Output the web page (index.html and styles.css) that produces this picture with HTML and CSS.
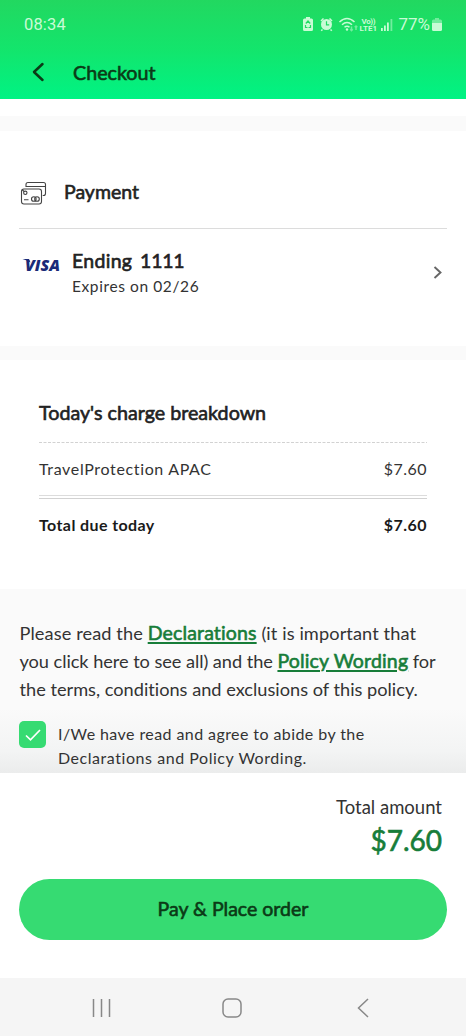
FILE: index.html
```html
<!DOCTYPE html>
<html lang="en">
<head>
<meta charset="utf-8">
<title>Checkout</title>
<link rel="stylesheet" href="styles.css">
</head>
<body>
<div class="screen">
  <header class="header">
    <div class="status">
      <span class="clock">08:34</span>
      <div class="status-icons">
        <svg class="status-glyphs" width="94" height="20" viewBox="0 0 94 20">
          <path fill="currentColor" d="M6 3h4v1.500h1.500q1.500 0 1.500 1.500v9.500q0 1.500-1.500 1.500h-7q-1.500 0-1.500-1.500v-9.500q0-1.500 1.500-1.500h1.500z"/>
          <path class="cutout" d="M5.800 9.500l2.200-2.500 2.200 2.500M5.500 11v2.500h2M10.500 11v2.500h-2"/>
          <circle cx="26.500" cy="10.500" r="5.500" fill="currentColor"/>
          <path class="line" d="M21 7l2.500-2.500M32 7l-2.500-2.500M22.500 15.500l-1.300 1.300M30.500 15.500l1.300 1.300"/>
          <path class="cutout" d="M26.500 7.200v3.600h2.700"/>
          <path class="line" d="M39.500 8q7.500-7 15 0M42 10.700q5-4.500 10 0M44.500 13.300q2.500-2.200 5 0"/>
          <circle cx="47" cy="15.500" r="1.200" fill="currentColor"/>
          <path class="line faint" d="M51.500 12.500v4M50.200 15.300l1.300 1.300 1.300-1.300M56 16v-4M54.700 13.300l1.300-1.300 1.300 1.300"/>
          <text class="volte" x="61.500" y="9.800" textLength="14">Vo))</text>
          <text class="volte" x="59.500" y="17.300" textLength="17.500">LTE1</text>
          <path fill="currentColor" d="M81 14h1.800v3h-1.800zM84 11.500h1.800v5.500h-1.800zM87 8.500h1.800v8.500h-1.800z"/>
          <path class="faint" fill="currentColor" d="M90.500 5h1.800v12h-1.800z"/>
        </svg>
        <span class="percent">77%</span>
        <svg width="10" height="14" viewBox="0 0 10 14"><path class="faint" fill="currentColor" d="M3 0h4v1.500h1.500q1.500 0 1.500 1.500v2H0V3q0-1.500 1.500-1.500H3z"/><path fill="currentColor" d="M0 5h10v6.500q0 1.500-1.500 1.500h-7Q0 13 0 11.500z"/></svg>
      </div>
    </div>
    <div class="titlebar">
      <svg width="12" height="20" viewBox="0 0 12 20"><path d="M10.500 2L2 10l8.500 8" fill="none" stroke="currentColor" stroke-width="2.500" stroke-linecap="round" stroke-linejoin="round"/></svg>
      <h1 class="title semibold">Checkout</h1>
    </div>
  </header>

  <main class="content">
    <section class="payment">
      <div class="payment-head">
        <svg class="cards" width="27" height="25" viewBox="0 0 27 25">
          <path d="M6 6V3.500Q6 1.500 8 1.500h15.500q2 0 2 2v9q0 2-2 2h-.8M6 5.500h19.500"/>
          <rect x="1.500" y="8" width="20" height="15" rx="2.500"/>
          <circle cx="5.300" cy="11.800" r="1.700"/><path d="M2 8.500l2 2M4 18.700h4.500"/>
          <circle cx="13.800" cy="18" r="2.300"/><circle cx="17" cy="18" r="2.300"/>
        </svg>
        <h2 class="payment-title semibold">Payment</h2>
      </div>
      <div class="card-row">
        <svg class="visa" width="40" height="24" viewBox="0 0 40 24"><text x="3" y="18" textLength="35" lengthAdjust="spacingAndGlyphs">VISA</text><path d="M.5 6h6.500l1.500 3.500Q5 7 .5 6z"/></svg>
        <div class="card-info">
          <div class="card-number semibold">Ending <span class="digits">1111</span></div>
          <div class="card-expiry">Expires on 02/26</div>
        </div>
        <svg class="chevron" width="9" height="15" viewBox="0 0 9 15"><path d="M1.500 2L7.500 7.500 1.500 13" fill="none" stroke="currentColor" stroke-width="1.900"/></svg>
      </div>
    </section>

    <section class="breakdown">
      <h2 class="breakdown-title semibold">Today's charge breakdown</h2>
      <svg class="dashes" width="388" height="1"><path d="M0 .5h388" stroke="#d2d2d2" stroke-dasharray="3 1.500"/></svg>
      <div class="line-item"><span>TravelProtection APAC</span><span class="price">$7.60</span></div>
      <div class="double-rule"></div>
      <div class="line-item total"><span>Total due today</span><span class="price">$7.60</span></div>
    </section>

    <section class="terms">
      <p class="terms-text">
        <span class="first-line">Please read the <a class="link semibold">Declarations</a> (it is important that</span><br>
        <span class="second-line">you click here to see all) and the <a class="link semibold">Policy Wording</a> for</span><br>
        <span>the terms, conditions and exclusions of this policy.</span>
      </p>
      <div class="agree">
        <span class="checkbox"><svg width="16" height="14" viewBox="0 0 16 14"><path d="M1 7.500l4.500 4.300L15 2" fill="none" stroke="#fff" stroke-width="1.700"/></svg></span>
        <p class="agree-text">I/We have read and agree to abide by the<br><span class="agree-second">Declarations and Policy Wording.</span></p>
      </div>
    </section>
  </main>

  <footer class="checkout-bar">
    <div class="amount-label">Total amount</div>
    <div class="amount semibold">$7.60</div>
    <button class="pay semibold">Pay &amp; Place order</button>
  </footer>

  <nav class="system-nav">
    <svg width="20" height="20" viewBox="0 0 20 20"><path d="M1.500 1v18M9.500 1v18M17.500 1v18"/></svg>
    <svg width="20" height="20" viewBox="0 0 20 20"><rect x="1" y="1" width="18" height="18" rx="5"/></svg>
    <svg class="nav-back" width="12" height="20" viewBox="0 0 12 20"><path d="M11 1L1.500 10l9.500 9"/></svg>
  </nav>
</div>
</body>
</html>
```

FILE: styles.css
```css
* { box-sizing: border-box; margin: 0; }
body { font-family: Lato, "Open Sans", sans-serif; font-variant-ligatures: none; background: #fff; color: #222; }
svg { display: block; flex: none; overflow: visible; }
.screen { width: 466px; height: 1036px; display: flex; flex-direction: column; overflow: hidden; }
.semibold { font-weight: 400; -webkit-text-stroke: .6px currentColor; }

.header { flex: none; height: 99px; background: linear-gradient(#22d860, #13e56c 50%, #00f384); }
.status { height: 48px; display: flex; justify-content: space-between; padding: 0 24px; color: #c9fbd5; font-family: Roboto, sans-serif; }
.clock { font-size: 16.500px; line-height: 49px; letter-spacing: .15px; }
.status-icons { display: flex; align-items: center; }
.status-icons > svg:last-child { margin: 2px 0 0 2px; }
.percent { font-size: 17px; line-height: 48px; margin-left: 4px; }
.line { fill: none; stroke: currentColor; stroke-width: 1.500; }
.cutout { fill: none; stroke: #1fdc63; stroke-width: 1.200; }
.faint { opacity: .5; }
.volte { font: 700 8px Roboto, sans-serif; fill: currentColor; }
.titlebar { height: 48px; display: flex; align-items: center; padding-left: 32px; color: #0b3a16; }
.title { font-size: 19.700px; line-height: 48px; margin: 1px 0 0 29px; }

.content { flex: none; height: 674px; background: #fafafa; }
.content::before { content: ""; display: block; height: 17px; background: #fff; }
.payment { margin-top: 15px; height: 215px; background: #fff; padding: 0 19px; }
.payment-head { height: 98px; padding: 24px 0 0; border-bottom: 1px solid #dcdcdc; display: flex; align-items: center; }
.cards { fill: none; stroke: #444; stroke-width: 1.100; margin: 3px 0 0 1px; }
.payment-title { font-size: 19.500px; margin-left: 17px; }
.card-row { display: flex; align-items: center; height: 87px; padding: 0 5px 0 3px; }
.visa { fill: #1a2a78; font: italic 800 16.500px "Open Sans", sans-serif; margin-top: -16px; }
.card-info { flex: 1; margin-left: 10px; padding-top: 1px; }
.card-number { font-size: 19.500px; line-height: 26px; letter-spacing: .3px; }
.digits { margin-left: 2.500px; letter-spacing: -.25px; }
.card-expiry { font-size: 15.500px; line-height: 24px; letter-spacing: .6px; color: #333; }
.chevron { color: #666; }

.breakdown { margin-top: 14px; height: 229px; background: #fff; padding: 34px 39px 0; }
.breakdown-title { font-size: 19.700px; line-height: 38px; height: 47px; }
.dashes { margin-top: 1px; }
.line-item { display: flex; justify-content: space-between; font-size: 16px; line-height: 51px; height: 52px; letter-spacing: .65px; color: #333; }
.price { letter-spacing: .45px; }
.double-rule { height: 4px; border-top: 1px solid #dcdcdc; border-bottom: 1px solid #d2d2d2; }
.total { font-weight: 700; color: #1a1a1a; letter-spacing: .4px; }

.terms { height: 184px; padding: 30px 19.500px 0; background: linear-gradient(#fafafa 65%, #f3f4f4 88%, #ebecec); }
.terms-text { font-size: 18.200px; line-height: 28px; color: #333; white-space: nowrap; }
.first-line { letter-spacing: .1px; }
.second-line { letter-spacing: -.05px; }
.link { font-size: 19.500px; line-height: 20px; letter-spacing: .15px; color: #177d39; text-decoration: underline; text-decoration-thickness: 2px; text-underline-offset: 2px; }
.agree { display: flex; margin: 18px 0 0 -.500px; }
.checkbox { width: 27px; height: 27px; border-radius: 5px; background: #36db72; display: flex; align-items: center; justify-content: center; }
.agree-text { margin: 1px 0 0 12px; font-size: 16px; line-height: 23.500px; letter-spacing: .42px; color: #333; white-space: nowrap; }
.agree-second { letter-spacing: .55px; }

.checkout-bar { flex: none; height: 205px; background: #fff; padding: 21px 19px 0; text-align: right; }
.amount-label { font-size: 18.500px; line-height: 26px; padding-right: 5px; color: #333; }
.amount { font-size: 28px; line-height: 40px; padding-right: 5px; color: #177d39; }
.pay { display: block; width: 428px; height: 61px; margin-top: 19px; padding: 0 0 2px; border: 0; border-radius: 31px; background: #36db72; color: #0b3a16; font-family: inherit; font-size: 19.500px; }
.system-nav { flex: none; height: 58px; background: #f5f5f5; display: flex; align-items: center; padding: 2px 0 0 92px; }
.system-nav svg { fill: none; stroke: #888; stroke-width: 1.500; margin-right: 110px; }
.system-nav .nav-back { margin: 0 0 0 5px; }
```
